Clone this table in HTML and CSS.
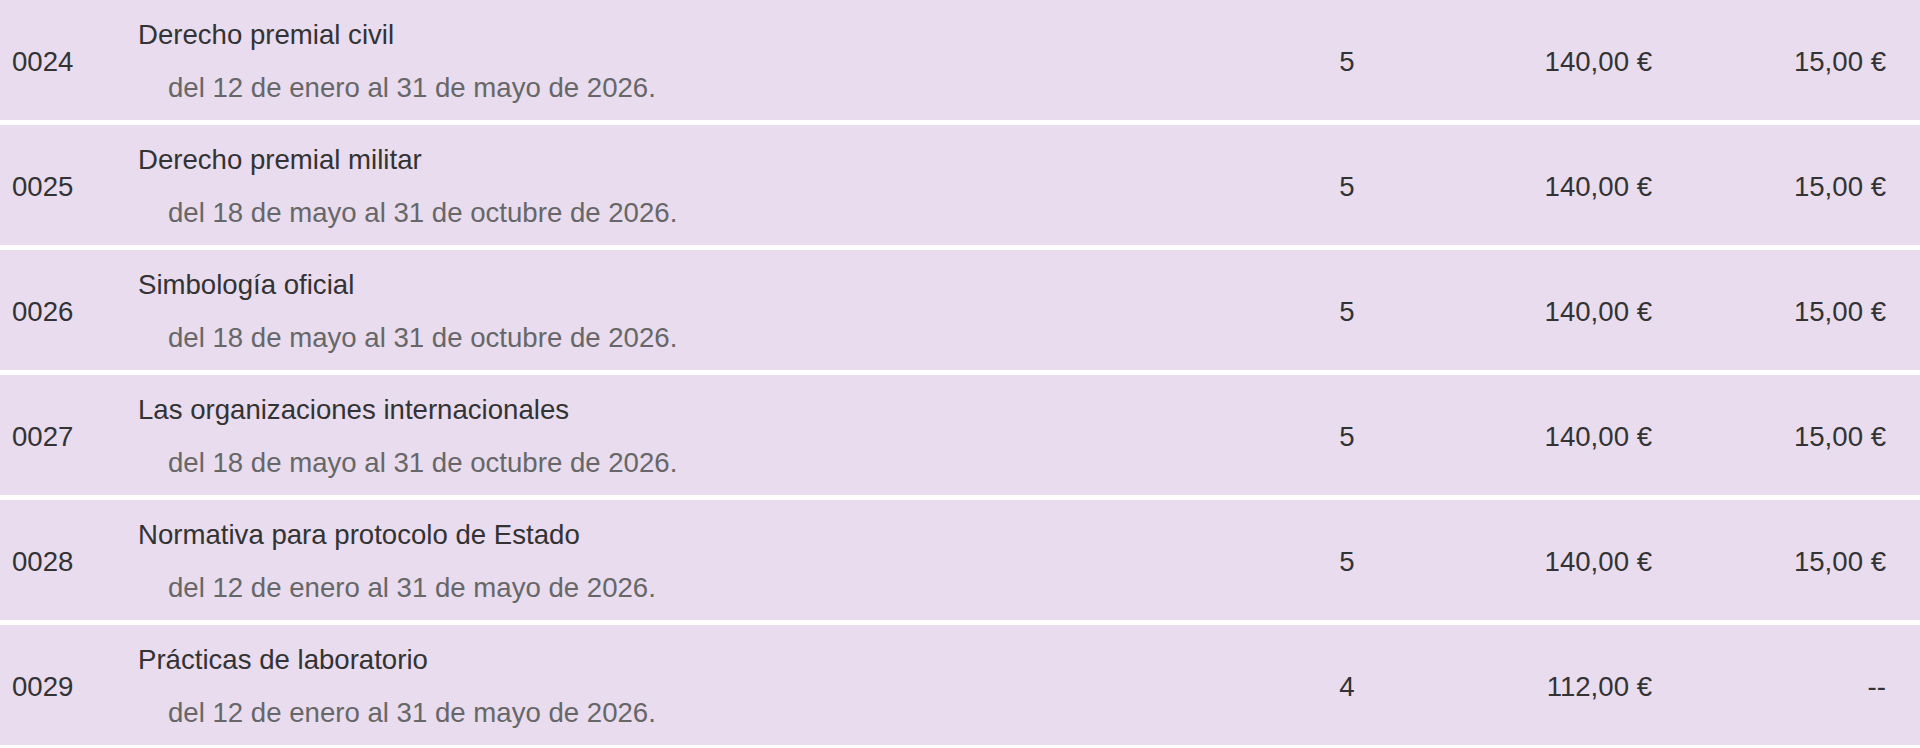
FILE: index.html
```html
<!DOCTYPE html>
<html lang="es">
<head>
<meta charset="utf-8">
<title>Cursos</title>
<link rel="stylesheet" href="styles.css">
</head>
<body>
<div class="list">
  <div class="row">
    <div class="code">0024</div>
    <div class="course"><div class="title">Derecho premial civil</div><div class="dates">del 12 de enero al 31 de mayo de 2026.</div></div>
    <div class="credits">5</div>
    <div class="price">140,00 €</div>
    <div class="fee">15,00 €</div>
  </div>
  <div class="row">
    <div class="code">0025</div>
    <div class="course"><div class="title">Derecho premial militar</div><div class="dates">del 18 de mayo al 31 de octubre de 2026.</div></div>
    <div class="credits">5</div>
    <div class="price">140,00 €</div>
    <div class="fee">15,00 €</div>
  </div>
  <div class="row">
    <div class="code">0026</div>
    <div class="course"><div class="title">Simbología oficial</div><div class="dates">del 18 de mayo al 31 de octubre de 2026.</div></div>
    <div class="credits">5</div>
    <div class="price">140,00 €</div>
    <div class="fee">15,00 €</div>
  </div>
  <div class="row">
    <div class="code">0027</div>
    <div class="course"><div class="title">Las organizaciones internacionales</div><div class="dates">del 18 de mayo al 31 de octubre de 2026.</div></div>
    <div class="credits">5</div>
    <div class="price">140,00 €</div>
    <div class="fee">15,00 €</div>
  </div>
  <div class="row">
    <div class="code">0028</div>
    <div class="course"><div class="title">Normativa para protocolo de Estado</div><div class="dates">del 12 de enero al 31 de mayo de 2026.</div></div>
    <div class="credits">5</div>
    <div class="price">140,00 €</div>
    <div class="fee">15,00 €</div>
  </div>
  <div class="row">
    <div class="code">0029</div>
    <div class="course"><div class="title">Prácticas de laboratorio</div><div class="dates">del 12 de enero al 31 de mayo de 2026.</div></div>
    <div class="credits">4</div>
    <div class="price">112,00 €</div>
    <div class="fee">--</div>
  </div>
</div>
</body>
</html>
```

FILE: styles.css
```css
html, body {
  margin: 0;
  padding: 0;
  background: #ffffff;
}

body {
  font-family: "Liberation Sans", Arial, sans-serif;
  font-size: 27.6px;
  color: #333333;
}

.list {
  display: flex;
  flex-direction: column;
  gap: 5px;
}

.row {
  display: grid;
  grid-template-columns: 126px 1fr 170px 220px 234px;
  align-items: center;
  box-sizing: border-box;
  height: 120px;
  padding: 3px 34px 0 12px;
  background: #e8dcee;
}

.title {
  color: #333333;
}

.dates {
  margin-top: 21px;
  padding-left: 30px;
  color: #676767;
}

.credits {
  text-align: center;
}

.price,
.fee {
  text-align: right;
}
```
